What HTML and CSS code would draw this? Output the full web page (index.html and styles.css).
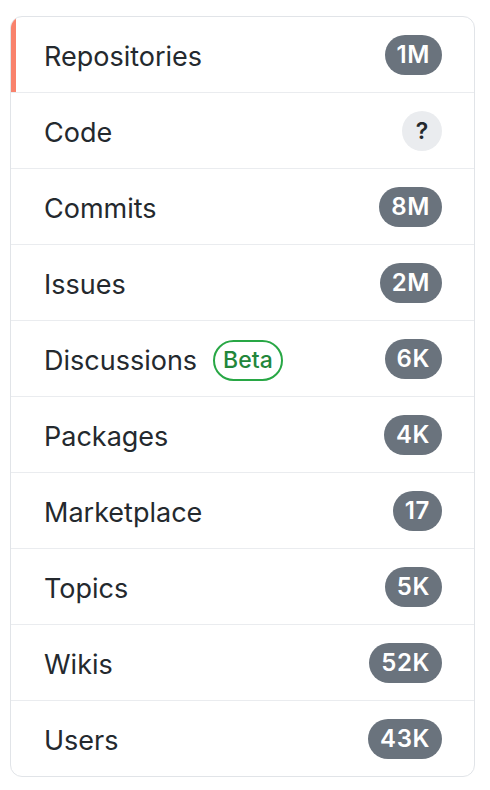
FILE: index.html
```html
<!DOCTYPE html>
<html>
<head>
<meta charset="utf-8">
<link rel="stylesheet" href="styles.css">
</head>
<body>
<nav class="menu">
  <a class="menu-item selected"><span class="title">Repositories</span><span class="counter">1M</span></a>
  <a class="menu-item"><span class="title">Code</span><span class="counter light">?</span></a>
  <a class="menu-item"><span class="title">Commits</span><span class="counter">8M</span></a>
  <a class="menu-item"><span class="title">Issues</span><span class="counter">2M</span></a>
  <a class="menu-item"><span class="title">Discussions <span class="label">Beta</span></span><span class="counter">6K</span></a>
  <a class="menu-item"><span class="title">Packages</span><span class="counter">4K</span></a>
  <a class="menu-item"><span class="title">Marketplace</span><span class="counter">17</span></a>
  <a class="menu-item"><span class="title">Topics</span><span class="counter">5K</span></a>
  <a class="menu-item"><span class="title">Wikis</span><span class="counter">52K</span></a>
  <a class="menu-item"><span class="title">Users</span><span class="counter">43K</span></a>
</nav>
</body>
</html>
```
FILE: styles.css
```css
html, body {
  margin: 0;
  padding: 0;
  background: #ffffff;
}
body {
  padding: 16px 15px 0 10px;
  font-family: Inter, "Liberation Sans", sans-serif;
  color: #24292e;
}
.menu {
  width: 465px;
  box-sizing: border-box;
  border: 1px solid #e1e4e8;
  border-radius: 12px;
  overflow: hidden;
  display: flex;
  flex-direction: column;
}
.menu-item {
  position: relative;
  display: flex;
  align-items: center;
  justify-content: space-between;
  height: 75px;
  padding: 0 32px 0 33px;
  font-size: 27px;
  color: #24292e;
}
.menu-item + .menu-item {
  border-top: 1px solid #eaecef;
}
.menu-item.selected::before {
  content: "";
  position: absolute;
  left: 0;
  top: 0;
  bottom: 0;
  width: 5px;
  background: #f9826c;
}
.title {
  display: flex;
  align-items: center;
  padding-top: 3px;
}
.label {
  display: inline-block;
  margin-left: 16px;
  padding: 0 8px;
  height: 37px;
  line-height: 37px;
  border: 2px solid #28a745;
  border-radius: 24px;
  color: #22863a;
  font-size: 23px;
  font-weight: 500;
}
.counter {
  display: inline-block;
  min-width: 40px;
  box-sizing: border-box;
  height: 40px;
  line-height: 40px;
  padding: 0 12px;
  border-radius: 20px;
  background: #6a737d;
  color: #ffffff;
  font-size: 24px;
  font-weight: 600;
  text-align: center;
  letter-spacing: 0.6px;
}
.counter.light {
  background: #eaecef;
  color: #24292e;
  padding: 0;
  width: 40px;
  font-size: 23px;
  letter-spacing: 0;
}
```
